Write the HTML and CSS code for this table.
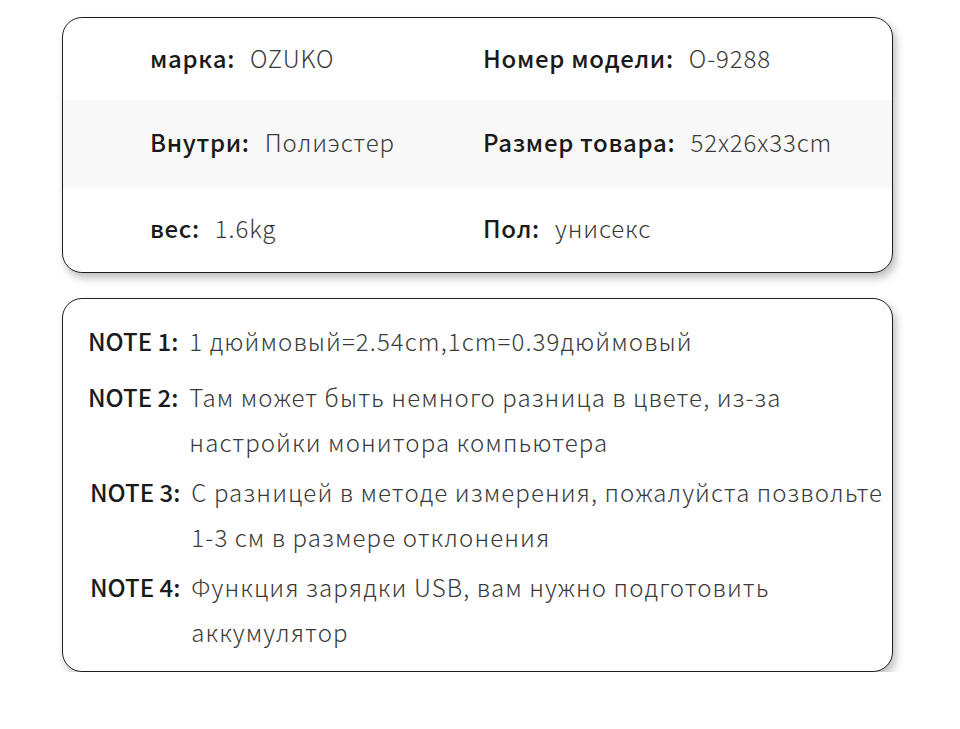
FILE: index.html
```html
<!DOCTYPE html>
<html lang="ru">
<head>
<meta charset="utf-8">
<title>OZUKO</title>
<link rel="stylesheet" href="styles.css">
</head>
<body>
<div class="page">
  <section class="card specs">
    <div class="row">
      <div class="cell"><span class="label">марка:</span><span class="value">OZUKO</span></div>
      <div class="cell"><span class="label">Номер модели:</span><span class="value">O-9288</span></div>
    </div>
    <div class="row alt">
      <div class="cell"><span class="label">Внутри:</span><span class="value">Полиэстер</span></div>
      <div class="cell"><span class="label">Размер товара:</span><span class="value">52x26x33cm</span></div>
    </div>
    <div class="row last">
      <div class="cell"><span class="label">вес:</span><span class="value">1.6kg</span></div>
      <div class="cell"><span class="label">Пол:</span><span class="value">унисекс</span></div>
    </div>
  </section>

  <section class="card notes">
    <div class="note note-lead">
      <span class="note-label">NOTE 1:</span>
      <span class="note-text">1 дюймовый=2.54cm,1cm=0.39дюймовый</span>
    </div>
    <div class="note">
      <span class="note-label">NOTE 2:</span>
      <span class="note-text">Там может быть немного разница в цвете, из-за<br>настройки монитора компьютера</span>
    </div>
    <div class="note note-shift">
      <span class="note-label">NOTE 3:</span>
      <span class="note-text">С разницей в методе измерения, пожалуйста позвольте<br>1-3 см в размере отклонения</span>
    </div>
    <div class="note note-shift">
      <span class="note-label">NOTE 4:</span>
      <span class="note-text">Функция зарядки USB, вам нужно подготовить<br>аккумулятор</span>
    </div>
  </section>
</div>
</body>
</html>
```

FILE: styles.css
```css
html, body {
  margin: 0;
  padding: 0;
  background: #ffffff;
}

body {
  font-family: "Noto Sans CJK SC", "Noto Sans", sans-serif;
  color: #1c1c1c;
}

.page {
  display: flex;
  flex-direction: column;
  gap: 25px;
  padding: 17px 0 0 62px;
}

.card {
  box-sizing: border-box;
  width: 831px;
  border: 1px solid #1f1f1f;
  border-radius: 20px;
  background: #ffffff;
  box-shadow: 3px 5px 8px rgba(0, 0, 0, 0.26);
  overflow: hidden;
}

/* Specs table */
.row {
  display: grid;
  grid-template-columns: 333px 1fr;
  align-items: center;
  height: 82px;
  padding-left: 87px;
  padding-bottom: 3px;
  box-sizing: border-box;
}

.row.alt {
  height: 89px;
  padding-bottom: 7px;
  background: #f8f8f8;
}

.row.last {
  height: 83px;
  padding-bottom: 6px;
}

.cell {
  display: flex;
  align-items: baseline;
  gap: 15px;
  font-size: 24px;
  white-space: nowrap;
}

.label {
  font-weight: 500;
  letter-spacing: 0.7px;
  color: #1a1a1a;
}

.value {
  font-weight: 300;
  letter-spacing: 0.9px;
  color: #3a3a3a;
}

/* Notes */
.notes {
  display: flex;
  flex-direction: column;
  gap: 5px;
  padding: 19px 0 17px 25px;
}

.note {
  display: flex;
  align-items: flex-start;
  gap: 11px;
  font-size: 24px;
  line-height: 45px;
  white-space: nowrap;
}

.note-lead {
  margin-bottom: 6px;
}

.note-shift {
  padding-left: 2px;
}

.note-label {
  font-weight: 500;
  letter-spacing: 0;
  color: #1a1a1a;
}

.note-text {
  font-weight: 300;
  letter-spacing: 1.1px;
  color: #3a3a3a;
}
```
